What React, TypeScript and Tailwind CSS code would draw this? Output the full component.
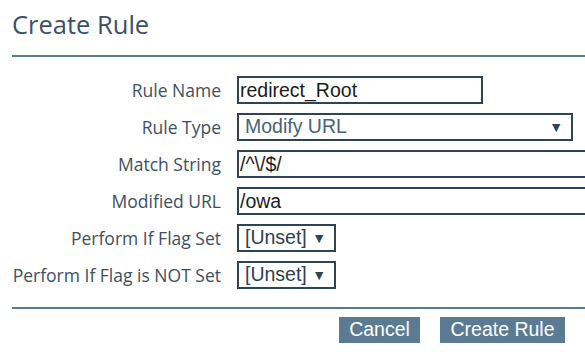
import React from "react";

const LABEL = "text-[17.5px] text-[#3e4f62] text-right w-[209px] shrink-0";
const BOX = "border-2 border-[#2e4356] bg-white h-[28px] text-[19.5px] leading-none";

function TextRow({ label, value, width }: { label: string; value: string; width: string }) {
  return (
    <div className="flex items-center gap-4 h-[28px]">
      <label className={LABEL}>{label}</label>
      <input
        readOnly
        defaultValue={value}
        className={`${BOX} ${width} px-[1px] text-[#1c1c1c] outline-none shrink-0`}
        style={{ fontFamily: '"Liberation Sans", Arial, sans-serif' }}
      />
    </div>
  );
}

function SelectRow({ label, value, width, textColor }: { label: string; value: string; width: string; textColor: string }) {
  return (
    <div className="flex items-center gap-4 h-[28px]">
      <label className={LABEL}>{label}</label>
      <div
        className={`${BOX} ${width} flex items-center justify-between pl-[6px] pr-[8px] shrink-0 ${textColor}`}
        style={{ fontFamily: '"Liberation Sans", Arial, sans-serif' }}
      >
        <span>{value}</span>
        <span className="text-[14px] text-[#2e4356]">▼</span>
      </div>
    </div>
  );
}

export default function App() {
  return (
    <div className="w-[585px] h-[357px] bg-white overflow-hidden pl-3" style={{ fontFamily: '"Open Sans", "Noto Sans", sans-serif' }}>
      <h1 className="pt-2 text-[25.5px] leading-[32px] text-[#3d5066]">Create Rule</h1>
      <div className="mt-[15px] h-[2px] bg-[#5b7b93]" />

      <form className="mt-[19px] flex flex-col gap-[9px]">
        <TextRow label="Rule Name" value="redirect_Root" width="w-[246px]" />
        <SelectRow label="Rule Type" value="Modify URL" width="w-[336px]" textColor="text-[#4a6078]" />
        <TextRow label="Match String" value="/^\/$/" width="w-[360px]" />
        <TextRow label="Modified URL" value="/owa" width="w-[360px]" />
        <SelectRow label="Perform If Flag Set" value="[Unset]" width="w-[99px]" textColor="text-[#2f3f50]" />
        <SelectRow label="Perform If Flag is NOT Set" value="[Unset]" width="w-[99px]" textColor="text-[#2f3f50]" />
      </form>

      <div className="mt-[18px] h-[2px] bg-[#5b7b93]" />

      <div className="mt-[8px] flex justify-end gap-5 pr-5" style={{ fontFamily: '"Liberation Sans", Arial, sans-serif' }}>
        <button type="button" className="h-[26px] w-[81px] bg-[#5b7b93] text-white text-[19.5px] leading-none">Cancel</button>
        <button type="button" className="h-[26px] w-[125px] bg-[#5b7b93] text-white text-[19.5px] leading-none">Create Rule</button>
      </div>
    </div>
  );
}
